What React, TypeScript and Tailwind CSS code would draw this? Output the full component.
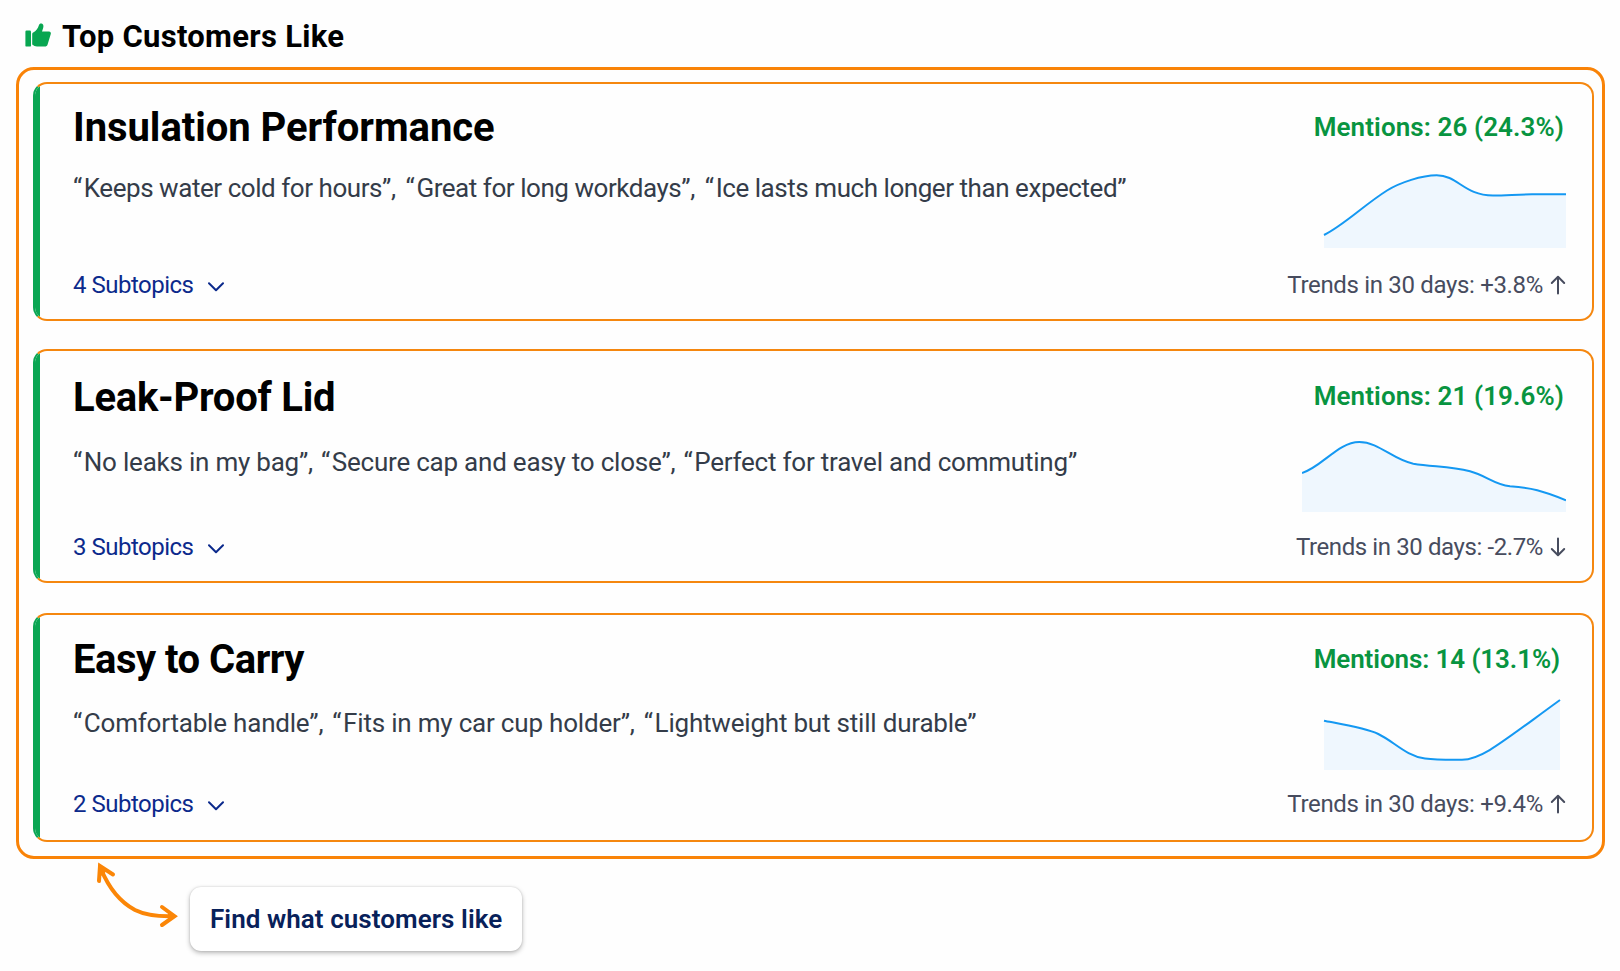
import clsx from 'clsx';

interface Chart {
  startX: number;
  endX: number;
  line: string;
}

interface Topic {
  title: string;
  titleClass: string;
  quotes: string[];
  quotesClass: string;
  subtopics: number;
  mentions: string;
  mentionsClass: string;
  trend: string;
  trendClass: string;
  rising: boolean;
  chart: Chart;
  chartClass: string;
  cardClass: string;
}

const topics: Topic[] = [
  {
    title: 'Insulation Performance',
    titleClass: 'mt-[24px] tracking-[-0.05px]',
    quotes: [
      'Keeps water cold for hours”,',
      'Great for long workdays”,',
      'Ice lasts much longer than expected”',
    ],
    quotesClass: 'mt-[27px] gap-[10px] tracking-[-0.45px]',
    subtopics: 4,
    mentions: '26 (24.3%)',
    mentionsClass: 'mt-[30px] mr-[2px] tracking-[0.1px]',
    trend: '+3.8%',
    trendClass: 'tracking-[-0.33px]',
    rising: true,
    chart: {
      startX: 22,
      endX: 264,
      line: 'M22 67 C42 57 62 37 85 22.5 C98 14.5 120 7.3 134.7 7.3 C156 7.3 162 27.5 191 27.5 C205 27.5 215 26.3 230 26.3 H264',
    },
    chartClass: 'mb-[25px]',
    cardClass: 'h-[239px] pb-[22px]',
  },
  {
    title: 'Leak-Proof Lid',
    titleClass: 'mt-[27px] tracking-[-0.25px]',
    quotes: [
      'No leaks in my bag”,',
      'Secure cap and easy to close”,',
      'Perfect for travel and commuting”',
    ],
    quotesClass: 'mt-[31px] gap-[8px] tracking-[-0.22px]',
    subtopics: 3,
    mentions: '21 (19.6%)',
    mentionsClass: 'mt-[32px] mr-[2px] tracking-[0.1px]',
    trend: '-2.7%',
    trendClass: 'tracking-[-0.4px]',
    rising: false,
    chart: {
      startX: 0,
      endX: 264,
      line: 'M0 41 C20 35 36 10 57.3 10 C77 10 91 28 111.3 31.7 C132 35 148 34 168 39.3 C184 43.5 192 52.5 208 54.3 C230 56 240 58.5 264 68.3',
    },
    chartClass: 'mb-[23px]',
    cardClass: 'mt-[28px] h-[234px] pb-[22px]',
  },
  {
    title: 'Easy to Carry',
    titleClass: 'mt-[25px] tracking-[-0.5px]',
    quotes: [
      'Comfortable handle”,',
      'Fits in my car cup holder”,',
      'Lightweight but still durable”',
    ],
    quotesClass: 'mt-[30px] gap-[9px] tracking-[-0.2px]',
    subtopics: 2,
    mentions: '14 (13.1%)',
    mentionsClass: 'mt-[31px] mr-[6px] tracking-[-0.1px]',
    trend: '+9.4%',
    trendClass: 'tracking-[-0.33px]',
    rising: true,
    chart: {
      startX: 22,
      endX: 258,
      line: 'M22 30.7 C36 33.5 64 38 76.3 44 C92 51.5 104 66 123 68.5 C135 70 150 69.7 160 69.7 C180 69.7 200 52 258 10',
    },
    chartClass: 'mb-[22px]',
    cardClass: 'mt-[30px] h-[229px] pb-[24px]',
  },
];

const Sparkline = ({ chart, className }: { chart: Chart; className: string }) => (
  <svg viewBox="0 0 264 80" className={clsx('h-[80px] w-[264px]', className)}>
    <path d={`${chart.line} L${chart.endX} 80 L${chart.startX} 80 Z`} fill="#eff7fe" />
    <path d={chart.line} fill="none" stroke="#1498f2" strokeWidth="2" />
  </svg>
);

const ThumbIcon = () => (
  <svg viewBox="0 0 26 24" className="h-6 w-[26px]" fill="#08a651">
    <rect x="0.4" y="7.6" width="5.6" height="16" rx="1.2" />
    <path d="M7.2 11.2 C7.2 10.4 7.5 10 8.2 9.6 C11 8 13 5.4 13.9 2.2 C14.4 0.4 16 0 17.2 0.8 C18.6 1.7 18.7 3.6 18 5.6 L17 8.4 H24 C25.6 8.4 26.2 9.8 25.7 11.2 L22.6 21.4 C22.2 22.9 21.2 23.5 19.6 23.5 H12 C10.2 23.5 8.8 22.9 7.2 21.6 Z" />
  </svg>
);

const TrendArrow = ({ rising }: { rising: boolean }) => (
  <svg
    viewBox="0 0 16 20"
    className={clsx('h-5 w-4', !rising && 'rotate-180')}
    fill="none"
    stroke="currentColor"
    strokeWidth="2"
    strokeLinecap="round"
    strokeLinejoin="round"
  >
    <path d="M8 18.5 V2 M1.8 8 L8 1.8 L14.2 8" />
  </svg>
);

const TopicCard = ({ topic }: { topic: Topic }) => (
  <article
    className={clsx(
      'relative flex overflow-hidden rounded-[14px] border-2 border-[#f5870f] border-l-[#0ba653]',
      topic.cardClass,
    )}
  >
    <span className="absolute inset-y-0 left-0 w-[5px] bg-[#0ba653]" />
    <div className="ml-[38px] flex flex-1 flex-col">
      <h2 className={clsx('text-[40px] leading-none font-bold text-black', topic.titleClass)}>
        {topic.title}
      </h2>
      <p className={clsx('flex text-[26px] leading-none whitespace-nowrap text-[#343c49]', topic.quotesClass)}>
        {topic.quotes.map((quote) => (
          <span key={quote}>
            <span className="tracking-[1.6px]">“</span>
            {quote}
          </span>
        ))}
      </p>
      <button className="mt-auto flex items-center self-start text-[24px] leading-none tracking-[-0.5px] text-[#0c2a8c]">
        {topic.subtopics} Subtopics
        <svg viewBox="0 0 16 10" className="mt-[3px] ml-[15px] h-[10px] w-4" fill="none">
          <path d="M1 1.2 L8 8.2 L15 1.2" stroke="currentColor" strokeWidth="2" strokeLinecap="round" strokeLinejoin="round" />
        </svg>
      </button>
    </div>
    <div className="mr-[26px] flex flex-col items-end">
      <p
        className={clsx(
          'text-[26px] leading-none font-semibold whitespace-nowrap text-[#089440]',
          topic.mentionsClass,
        )}
      >
        Mentions: {topic.mentions}
      </p>
      <Sparkline chart={topic.chart} className={clsx('mt-auto', topic.chartClass)} />
      <p
        className={clsx(
          'flex items-center gap-[7px] text-[24px] leading-none whitespace-nowrap text-[#474c5e]',
          topic.trendClass,
        )}
      >
        Trends in 30 days: {topic.trend}
        <TrendArrow rising={topic.rising} />
      </p>
    </div>
  </article>
);

export default function App() {
  return (
    <main className="h-[971px] w-[1620px] overflow-hidden bg-[#fefefe] px-4 font-['Roboto','Inter',sans-serif]">
      <header className="flex h-[67px] items-start gap-[11px] pt-[21px] pl-[9px]">
        <div className="pt-[2px]">
          <ThumbIcon />
        </div>
        <h1 className="text-[31px] leading-none font-bold tracking-[0.3px] text-black">
          Top Customers Like
        </h1>
      </header>

      <section className="h-[792px] w-[1589px] rounded-[18px] border-[3px] border-[#f98307] pt-[12px] pr-[8px] pl-[14px]">
        {topics.map((topic) => (
          <TopicCard key={topic.title} topic={topic} />
        ))}
      </section>

      <footer className="flex pl-[80px]">
        {/* Double-headed arrow from the callout up to the list */}
        <svg
          viewBox="96 859 84 70"
          className="h-[70px] w-[84px]"
          fill="none"
          stroke="#fb8607"
          strokeWidth="4"
        >
          <path d="M101 869 C108 886 120 902 135 910 C147 916 160 916.5 173 916.2" />
          <path d="M99 881 L100 866 L113 874.5" strokeLinecap="round" />
          <path d="M162 907 L174.5 916.2 L162 925" strokeLinecap="round" />
          <path d="M98.5 863.5 L107 869.5 L103 876 L99 875 Z M177 916.2 L168 910.5 V921.9 Z" fill="#fb8607" stroke="none" />
        </svg>
        <div className="mt-[28px] ml-[10px] flex h-[64px] w-[332px] items-center rounded-[11px] bg-white pl-[20px] text-[26px] leading-none font-semibold tracking-[0.06px] text-[#08215a] shadow-[0_2px_5px_rgba(0,0,0,0.28),0_0_2px_rgba(0,0,0,0.15)]">
          Find what customers like
        </div>
      </footer>
    </main>
  );
}
